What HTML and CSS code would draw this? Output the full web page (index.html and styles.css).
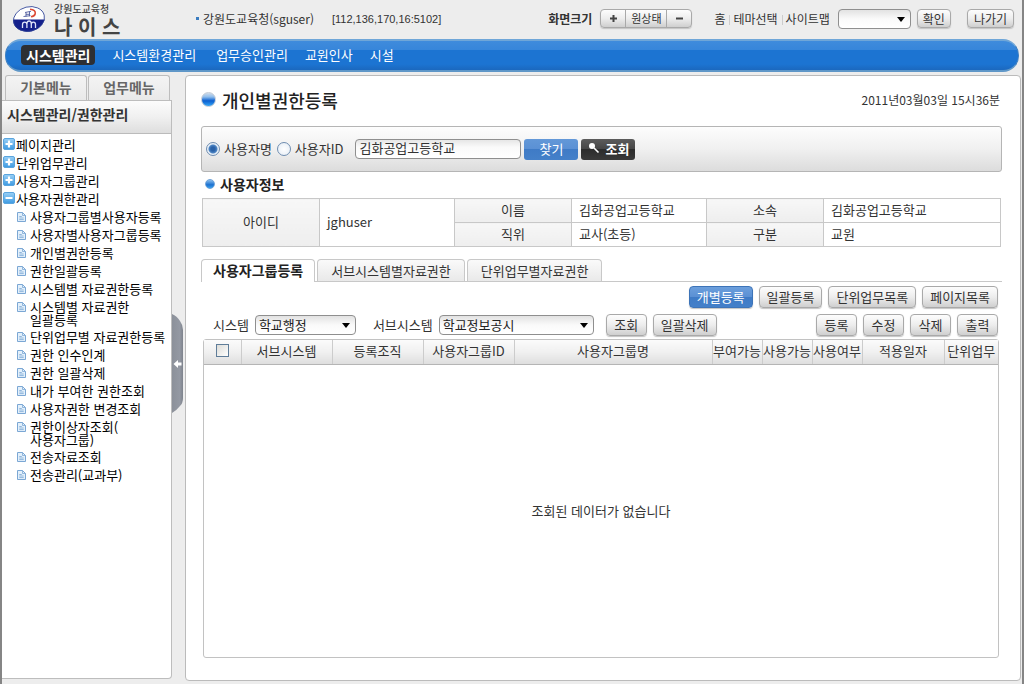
FILE: index.html
```html
<!DOCTYPE html>
<html lang="ko">
<head>
<meta charset="utf-8">
<title>나이스 - 개인별권한등록</title>
<link rel="stylesheet" href="styles.css">
</head>
<body>
<svg class="defs" aria-hidden="true">
  <defs>
    <linearGradient id="tileFill" x1="0" y1="0" x2="0" y2="1">
      <stop offset="0" stop-color="#9ad0f6"/><stop offset="1" stop-color="#3d9ae2"/>
    </linearGradient>
    <symbol id="plus" viewBox="0 0 12 12">
      <rect x=".5" y=".5" width="11" height="11" rx="1.5" fill="url(#tileFill)" stroke="#5aa5de"/>
      <path d="M6 2.500v7M2.500 6h7" stroke="#fff" stroke-width="2.200"/>
    </symbol>
    <symbol id="minus" viewBox="0 0 12 12">
      <rect x=".5" y=".5" width="11" height="11" rx="1.5" fill="url(#tileFill)" stroke="#5aa5de"/>
      <path d="M2.500 6h7" stroke="#fff" stroke-width="2"/>
    </symbol>
    <symbol id="doc" viewBox="0 0 9 10">
      <path d="M.5.5h5l3 3v6h-8z" fill="#e3f0fb" stroke="#7ba7d4"/>
      <path d="M5.5.5v3h3M2.3 4.5h2.5M2.3 6h4.4M2.3 7.6h4.4" fill="none" stroke="#7ba7d4" stroke-width=".8"/>
    </symbol>
  </defs>
</svg>
<div class="app">
  <header class="top">
    <a class="brand" href="#">
      <svg class="brand-mark" viewBox="0 0 34 28" aria-hidden="true">
        <defs><clipPath id="disc"><ellipse cx="17" cy="14" rx="16" ry="12.500" transform="rotate(-14 17 14)"/></clipPath></defs>
        <g clip-path="url(#disc)">
          <path d="M0 0h34v28H0z" fill="#fff"/>
          <path d="M0 14.500h34V28H0z" fill="#14208c"/>
        </g>
        <ellipse cx="17" cy="14" rx="15.700" ry="12.200" transform="rotate(-14 17 14)" fill="none" stroke="#2a3f93" stroke-width=".8"/>
        <path d="M10.500 23v-3.500q0-2.300 2.200-2.300t2.200 2.300V23M14.900 19q0-3 2.200-3t2.200 3v4M19.300 19.500q0-2.300 2.100-2.300t2.100 2.300V23" fill="none" stroke="#dfe4fa" stroke-width="1.300"/>
        <path d="M18 4.200q6 .6 5.200 4.600-.6 2.600-4.200 2.900" fill="none" stroke="#dc4a34" stroke-width="1.600"/>
        <path d="M13 7.500l6-1.200M11.500 11.500l7-.8M14 7.500v4M17.500 6.700v4.500M14 9.300h3.500" stroke="#4d5a9c" stroke-width=".9"/>
      </svg>
      <span class="brand-text"><small>강원도교육청</small><strong>나 이 스</strong></span>
    </a>
    <p class="session"><span class="who">강원도교육청(sguser)</span><span class="ip">[112,136,170,16:5102]</span></p>
    <div class="tools">
      <b>화면크기</b>
      <div class="zoomer">
        <button type="button" aria-label="확대"><svg viewBox="0 0 9 9"><path d="M4.500 1v7M1 4.500h7" stroke="#444" stroke-width="2"/></svg></button>
        <button type="button">원상태</button>
        <button type="button" aria-label="축소"><svg viewBox="0 0 9 9"><path d="M1 4.500h7" stroke="#444" stroke-width="2"/></svg></button>
      </div>
      <nav class="links"><a href="#">홈</a><a href="#">테마선택</a><a href="#">사이트맵</a></nav>
      <span class="pick pick-site"><select aria-label="바로가기"><option></option></select></span>
      <button type="button" class="btn small">확인</button>
      <button type="button" class="btn small exit">나가기</button>
    </div>
  </header>

  <nav class="main-nav">
    <a class="on" href="#">시스템관리</a>
    <a class="wide" href="#">시스템환경관리</a>
    <a href="#">업무승인관리</a>
    <a href="#">교원인사</a>
    <a href="#">시설</a>
  </nav>

  <div class="work">
    <aside class="side">
      <div class="side-tabs"><button type="button">기본메뉴</button><button type="button">업무메뉴</button></div>
      <div class="side-body">
        <h2>시스템관리/권한관리</h2>
        <ul class="tree">
          <li><a href="#"><svg class="tile"><use href="#plus"/></svg>페이지관리</a></li>
          <li><a href="#"><svg class="tile"><use href="#plus"/></svg>단위업무관리</a></li>
          <li><a href="#"><svg class="tile"><use href="#plus"/></svg>사용자그룹관리</a></li>
          <li><a href="#"><svg class="tile"><use href="#minus"/></svg>사용자권한관리</a>
            <ul>
              <li><a href="#"><svg class="doc"><use href="#doc"/></svg>사용자그룹별사용자등록</a></li>
              <li><a href="#"><svg class="doc"><use href="#doc"/></svg>사용자별사용자그룹등록</a></li>
              <li><a href="#"><svg class="doc"><use href="#doc"/></svg>개인별권한등록</a></li>
              <li><a href="#"><svg class="doc"><use href="#doc"/></svg>권한일괄등록</a></li>
              <li><a href="#"><svg class="doc"><use href="#doc"/></svg>시스템별 자료권한등록</a></li>
              <li><a class="two-line" href="#"><svg class="doc"><use href="#doc"/></svg><span>시스템별 자료권한<br>일괄등록</span></a></li>
              <li><a href="#"><svg class="doc"><use href="#doc"/></svg>단위업무별 자료권한등록</a></li>
              <li><a href="#"><svg class="doc"><use href="#doc"/></svg>권한 인수인계</a></li>
              <li><a href="#"><svg class="doc"><use href="#doc"/></svg>권한 일괄삭제</a></li>
              <li><a href="#"><svg class="doc"><use href="#doc"/></svg>내가 부여한 권한조회</a></li>
              <li><a href="#"><svg class="doc"><use href="#doc"/></svg>사용자권한 변경조회</a></li>
              <li><a class="two-line" href="#"><svg class="doc"><use href="#doc"/></svg><span>권한이상자조회(<br>사용자그룹)</span></a></li>
              <li><a href="#"><svg class="doc"><use href="#doc"/></svg>전송자료조회</a></li>
              <li><a href="#"><svg class="doc"><use href="#doc"/></svg>전송관리(교과부)</a></li>
            </ul>
          </li>
        </ul>
      </div>
    </aside>

    <div class="gutter">
      <button type="button" aria-label="메뉴 접기">
        <svg viewBox="0 0 12 100">
          <defs><linearGradient id="grip"><stop offset="0" stop-color="#8c919a"/><stop offset=".7" stop-color="#9499a3"/><stop offset="1" stop-color="#7d828c"/></linearGradient></defs>
          <path d="M0 0q5 2 8 7 3 4 3 9v68q0 5-3 8-3 4-8 7z" fill="url(#grip)"/>
          <path d="M1.500 50l4.500-4v2.500h3.500v3H6V54z" fill="#fff"/>
        </svg>
      </button>
    </div>

    <main class="page">
      <div class="page-head">
        <h1><i class="orb"></i>개인별권한등록</h1>
        <time datetime="2011-03-03T15:36">2011년03월03일 15시36분</time>
      </div>

      <form class="search">
        <label><input type="radio" name="by" checked>사용자명</label>
        <label><input type="radio" name="by">사용자ID</label>
        <input type="text" class="keyword" aria-label="검색어" value="김화공업고등학교">
        <button type="button" class="find">찾기</button>
        <button type="button" class="query"><svg viewBox="0 0 12 12" aria-hidden="true"><circle cx="4" cy="4" r="3" fill="#fff"/><path d="M6 6l4.500 4.500" stroke="#fff" stroke-width="1.600"/></svg>조회</button>
      </form>

      <h2 class="section"><i class="orb orb-small"></i>사용자정보</h2>
      <table class="info">
        <colgroup><col class="c-key"><col class="c-id"><col class="c-key"><col class="c-id"><col class="c-key"><col></colgroup>
        <tr><th rowspan="2">아이디</th><td rowspan="2">jghuser</td><th>이름</th><td>김화공업고등학교</td><th>소속</th><td>김화공업고등학교</td></tr>
        <tr><th>직위</th><td>교사(초등)</td><th>구분</th><td>교원</td></tr>
      </table>

      <div class="tabs">
        <button type="button" class="on">사용자그룹등록</button>
        <button type="button">서브시스템별자료권한</button>
        <button type="button">단위업무별자료권한</button>
      </div>

      <div class="actions end">
        <button type="button" class="btn primary">개별등록</button>
        <button type="button" class="btn">일괄등록</button>
        <button type="button" class="btn">단위업무목록</button>
        <button type="button" class="btn">페이지목록</button>
      </div>
      <div class="actions">
        <label for="sys">시스템</label>
        <span class="pick pick-sys"><select id="sys"><option>학교행정</option></select></span>
        <label class="second" for="sub">서브시스템</label>
        <span class="pick pick-sub"><select id="sub"><option>학교정보공시</option></select></span>
        <button type="button" class="btn look">조회</button>
        <button type="button" class="btn">일괄삭제</button>
        <span class="push"></span>
        <button type="button" class="btn">등록</button>
        <button type="button" class="btn">수정</button>
        <button type="button" class="btn">삭제</button>
        <button type="button" class="btn">출력</button>
      </div>

      <div class="grid">
        <table>
          <colgroup><col class="g-check"><col class="g-mid"><col class="g-mid"><col class="g-mid"><col><col class="g-flag"><col class="g-flag"><col class="g-flag"><col class="g-date"><col class="g-unit"></colgroup>
          <thead><tr>
            <th><input type="checkbox" aria-label="전체선택"></th><th>서브시스템</th><th>등록조직</th><th>사용자그룹ID</th><th>사용자그룹명</th><th>부여가능</th><th>사용가능</th><th>사용여부</th><th>적용일자</th><th>단위업무</th>
          </tr></thead>
        </table>
        <p>조회된 데이터가 없습니다</p>
      </div>
    </main>
  </div>
</div>
</body>
</html>
```

FILE: styles.css
```css
* { box-sizing: border-box; }

body {
  margin: 0;
  background: #ededed;
  color: #333;
  font: 13px/18px "Noto Sans CJK KR", sans-serif;
}

button, input, select { font: inherit; color: inherit; margin: 0; }
button { padding: 0; border: 0; background: none; white-space: nowrap; }
a { color: inherit; text-decoration: none; }
h1, h2, p, ul { margin: 0; padding: 0; }
ul { list-style: none; }
svg { display: block; flex: none; }
.defs { position: absolute; width: 0; height: 0; }

.app {
  display: flex;
  flex-direction: column;
  min-height: 100vh;
  padding-bottom: 3px;
  border-left: 2px solid #858585;
  border-right: 2px solid #858585;
}

/* header */
.top { display: flex; align-items: center; height: 39px; padding: 0 8px 2px 10px; }
.brand { display: flex; gap: 8px; width: 184px; }
.brand-mark { width: 34px; height: 28px; margin-top: 5px; }
.brand-text { display: flex; flex-direction: column; padding-top: 2px; color: #444; }
.brand-text small { font-size: 10px; line-height: 14px; font-weight: 500; }
.brand-text strong { font-size: 20px; line-height: 21px; white-space: pre; }
.session { display: flex; align-items: center; gap: 18px; }
.session::before { content: ""; width: 3px; height: 3px; margin-right: -14px; background: #3a7cc0; }
.who { font-size: 12px; }
.ip { font: 11px/18px "Liberation Sans", sans-serif; }
.tools { display: flex; align-items: center; margin-left: auto; font-size: 12px; }
.tools b { margin-right: 8px; }

.zoomer, .btn {
  height: 22px;
  border: 1px solid #a9a9a9;
  border-radius: 4px;
  background: linear-gradient(#fdfdfd, #ededed 50%, #cfcfcf);
  box-shadow: 0 1px 1px #c4c4c4;
}
.zoomer { display: flex; height: 19px; margin-right: 22px; }
.zoomer button { display: flex; align-items: center; justify-content: center; width: 24px; line-height: 15px; font-size: 11px; }
.zoomer button:nth-child(2) { width: 42px; border: solid #a9a9a9; border-width: 0 1px; }
.zoomer svg { width: 9px; height: 9px; }
.links { display: flex; align-items: center; }
.links a + a { margin-left: 4px; padding-left: 4px; background: linear-gradient(#ccc, #ccc) 0 5px / 1px 10px no-repeat; }
.btn { min-width: 41px; padding: 0 7px 2px; line-height: 17px; font-size: 13px; }
.btn.small { min-width: 34px; height: 19px; padding: 0 5px 1px; line-height: 15px; font-size: 12px; }
.btn.small.exit { margin-left: 16px; padding: 0 6px 1px; }
.btn.primary { border-color: #3d74b8; color: #fff; background: linear-gradient(#6c9fdc, #5a90d4 50%, #3f7bc6 50%, #4480c9); }

.pick { position: relative; display: block; }
.pick select {
  display: block;
  width: 100%;
  height: 20px;
  padding: 0 3px 1px;
  border: 1px solid #8f8f8f;
  border-radius: 4px;
  appearance: none;
  background: linear-gradient(#e2e2e2, #fafafa 50%, #fff);
  color: #222;
  line-height: 16px;
}
.pick::after {
  content: "";
  position: absolute;
  right: 6px;
  top: 8px;
  border: 4px solid transparent;
  border-top: 5px solid #000;
  border-bottom: 0;
  pointer-events: none;
}
.pick-site { width: 73px; margin: 0 6px 0 8px; }
.pick-sys { width: 101px; }
.pick-sub { width: 155px; }

/* main navigation */
.main-nav {
  display: flex;
  align-items: center;
  gap: 17px;
  height: 33px;
  margin: 0 3px;
  padding: 0 15px 1px;
  border: solid;
  border-width: 2px 1px;
  border-color: #6fa6d8 #3f80c2 #5f97c8;
  border-radius: 16px;
  background: linear-gradient(#3f8bdc, #3786da 30%, #1c74d2 32%, #1c74d2 80%, #1b68be);
  color: #fff;
}
.main-nav .on { padding: 0 5px; border-radius: 4px; background: #2d2f33; font-size: 14px; line-height: 20px; font-weight: bold; }
.main-nav .wide { padding-right: 3px; }

.work { display: flex; flex: 1; padding: 3px 1px 0 0; }

/* sidebar */
.side { display: flex; flex-direction: column; width: 170px; }
.side-tabs { display: flex; gap: 1px; padding: 0 2px 0 3px; }
.side-tabs button {
  flex: 1;
  height: 25px;
  padding-bottom: 3px;
  border: 1px solid #bdbdbd;
  border-bottom: 0;
  border-radius: 3px 3px 0 0;
  background: linear-gradient(#f4f4f4, #e9e9e9);
  color: #666;
  font-size: 14px;
  font-weight: bold;
}
.side-body { flex: 1; margin-bottom: 2px; border: 1px solid #bdbdbd; border-left: 0; border-radius: 0 0 4px 0; background: #fff; }
.side-body h2 {
  height: 33px;
  padding: 0 5px;
  border-bottom: 1px solid #bbb;
  background: linear-gradient(#fcfcfc, #f0f0f0 50%, #dedede);
  font-size: 14px;
  line-height: 27px;
}
.tree { padding: 2px 0 0 1px; color: #000; }
.tree a { display: flex; gap: 1px; padding: 2px 0 3px; line-height: 13px; white-space: nowrap; }
.tree .two-line { padding: 2px 0; }
.tree ul { padding-left: 14px; }
.tree ul a { gap: 4px; }
.tile { width: 12px; height: 12px; }
.doc { width: 9px; height: 10px; margin-top: 2px; }

.gutter { display: flex; flex-direction: column; justify-content: center; width: 13px; padding-bottom: 28px; }
.gutter svg { width: 12px; height: 100px; }

/* page */
.page {
  display: flex;
  flex: 1;
  flex-direction: column;
  min-width: 0;
  padding: 0 18px 22px 15px;
  border: 1px solid #bbb;
  border-radius: 4px;
  background: #fff;
}
.page-head { display: flex; align-items: center; justify-content: space-between; height: 50px; padding: 0 2px 3px 0; }
.page-head h1 { display: flex; align-items: center; gap: 6px; font-size: 18px; line-height: 24px; font-weight: 500; color: #222; }
.page-head time { font-size: 12px; }
.orb {
  width: 15px;
  height: 15px;
  border: 1px solid #c3cbd6;
  border-radius: 50%;
  background: linear-gradient(#cfdcea, #8fbdec 30%, #0a5fd0 60%, #35a5f5);
}
.orb-small { width: 10px; height: 10px; border-color: #6fa3d8; background: linear-gradient(#8cc0ee, #1b70d0 60%, #39a2ee); }

.search {
  display: flex;
  align-items: center;
  height: 46px;
  padding: 0 4px;
  border: 1px solid #b5b5b5;
  border-radius: 3px;
  background: linear-gradient(#fdfdfd, #f0f0f0 50%, #dcdcdc);
}
.search label { display: flex; align-items: center; gap: 4px; margin-right: 5px; }
.search input[type="radio"] {
  width: 14px;
  height: 14px;
  border: 1px solid #6f8db0;
  border-radius: 50%;
  appearance: none;
  background: radial-gradient(#fff, #e4ecf5);
}
.search input[type="radio"]:checked { background: radial-gradient(#2a62a8 0 2px, #4f86c4 4px, #e8f0f8 5px); }
.keyword {
  width: 166px;
  height: 20px;
  margin: 0 3px 0 7px;
  padding: 0 3px 3px;
  border: 1px solid #8f8f8f;
  border-radius: 4px;
  background: linear-gradient(#e6e6e6, #fafafa 40%, #fff);
}
.find, .query { width: 54px; height: 21px; padding-bottom: 2px; border-radius: 3px; color: #fff; line-height: 19px; }
.find { margin-right: 3px; background: linear-gradient(#6398d8, #5a90d4 50%, #3f7bc6 50%, #4480c9); }
.query { display: flex; align-items: center; justify-content: center; gap: 6px; background: linear-gradient(#5c5c5c, #454545 50%, #2c2c2c 50%, #3a3a3a); font-weight: bold; }
.query svg { width: 12px; height: 12px; }

.section { display: flex; align-items: center; gap: 5px; height: 26px; padding: 0 0 2px 4px; color: #222; font-size: 14px; }

table { width: 100%; table-layout: fixed; border-collapse: collapse; }
.info { width: calc(100% - 2px); margin: 0 1px; }
.info th, .info td { height: 24px; padding: 0 7px 2px; border: 1px solid #c8c8c8; line-height: 18px; text-align: left; }
.info th { background: linear-gradient(#f7f7f7, #eee); font-weight: normal; text-align: center; }
.c-key { width: 117px; }
.c-id { width: 135px; }

.tabs { display: flex; gap: 2px; margin-top: 12px; border-bottom: 1px solid #c8c8c8; }
.tabs button {
  height: 22px;
  padding: 0 13px 1px;
  border: 1px solid #c8c8c8;
  border-bottom: 0;
  border-radius: 4px 4px 0 0;
  background: linear-gradient(#fafafa, #e9e9e9);
  line-height: 19px;
}
.tabs .on { height: 23px; margin-bottom: -1px; padding: 0 11px 2px; background: #fff; color: #222; font-size: 14px; font-weight: bold; }

.actions { display: flex; align-items: center; gap: 6px; height: 28px; padding: 0 4px 0 12px; }
.actions.end { justify-content: flex-end; margin-top: 1px; }
.actions .second { margin-left: 11px; }
.actions .look { margin-left: 6px; }
.push { flex: 1; }

/* result grid */
.grid { display: flex; flex: 1; flex-direction: column; margin: 0 3px 0 2px; border: 1px solid #c2c2c2; border-radius: 3px; }
.grid th {
  height: 24px;
  padding: 0 0 2px;
  border-left: 1px solid #ccc;
  border-bottom: 1px solid #b5b5b5;
  background: linear-gradient(#fbfbfb, #f0f0f0 50%, #dedede);
  font-weight: normal;
  white-space: nowrap;
}
.grid th:first-child { border-left: 0; }
.grid input { display: block; width: 13px; height: 13px; margin: 0 auto; border: 1px solid #5f7d99; appearance: none; background: linear-gradient(135deg, #dcdcd8, #fff); }
.grid p { display: flex; flex: 1; align-items: center; justify-content: center; }
.g-check { width: 37px; }
.g-mid { width: 91px; }
.g-flag { width: 50px; }
.g-date { width: 82px; }
.g-unit { width: 54px; }
```
